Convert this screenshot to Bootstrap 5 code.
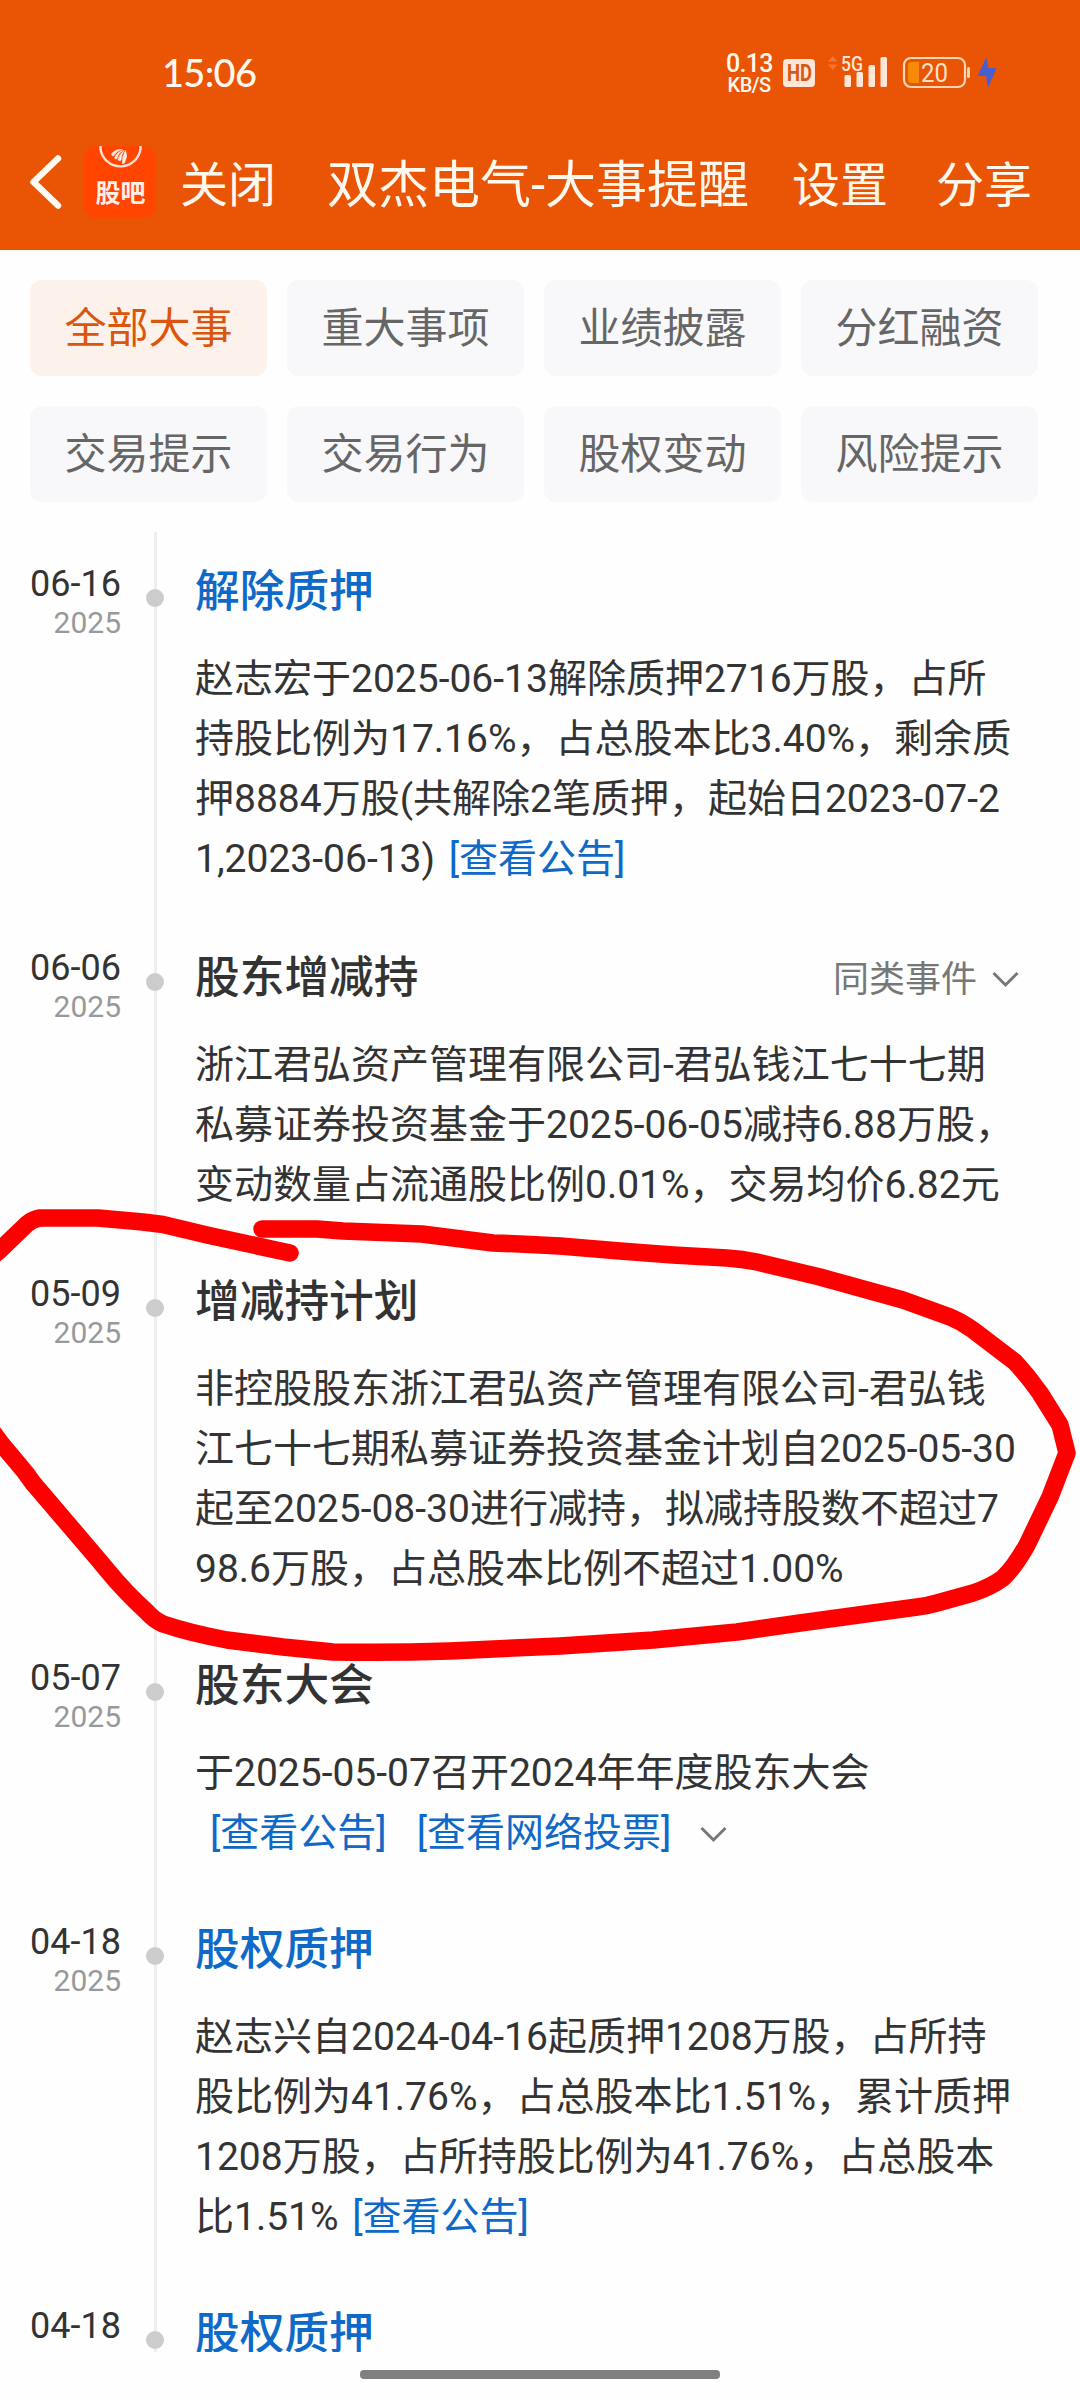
<!DOCTYPE html>
<html lang="zh-CN">
<head>
<meta charset="utf-8">
<meta name="viewport" content="width=device-width, initial-scale=1">
<title>双杰电气-大事提醒</title>
<link href="https://cdn.jsdelivr.net/npm/bootstrap@5.3.0/dist/css/bootstrap.min.css" rel="stylesheet">
<style>
body{width:1080px;height:2400px;margin:0;overflow:hidden;background:#fefefe;color:#333;font-family:Roboto,"Noto Sans CJK SC",sans-serif;font-size:39px;line-height:60px}
.app-top{height:250px;background:#e95504;color:#fff8ee}
.status-bar{height:146px;padding:52px 84px 0 162px}
.clock-text{font:500 38px/40px Lato,"Noto Sans",sans-serif;letter-spacing:-.7px}
.net-speed{width:46px;margin-right:10px;text-align:center;font-weight:500}
.net-speed span{display:block;white-space:nowrap}
.net-num{font-size:25px;line-height:23px;letter-spacing:-.7px}
.net-unit{font-size:20px;line-height:20px;letter-spacing:-.6px}
.title-bar{height:72px;font-size:48px;line-height:72px;white-space:nowrap}
.title-bar span{padding-top:7px}
.page-title{font-size:51px}
.app-logo{width:72px;height:72px}
.filters{display:grid;grid-template-columns:repeat(4,237px);column-gap:20px;row-gap:30px;padding:30px}
.filters .btn{height:96px;padding:1px 0 0;border:0;border-radius:12px;background:#f8f8fa;color:#666;font-size:42px;line-height:95px}
.filters .btn.active{background:#fdf1eb;color:#d9560c}
.timeline{height:1820px;overflow:hidden}
.stamp{width:121px;padding-top:31px;color:#333;font-size:36px;line-height:42px}
.stamp small{display:block;color:#999;font-size:30px;line-height:36px}
.rail{width:18px;margin:0 31px 0 25px;padding-top:57px;background:linear-gradient(#eee,#eee) 8px 0/3px 100% no-repeat}
.rail i{display:block;width:18px;height:18px;border-radius:50%;background:#ccc}
.entry-main{width:824px;padding:29px 0 27px;white-space:nowrap}
.entry-main h2{margin:0;font-size:44.700px;line-height:63px;font-weight:500}
.entry-head{margin-bottom:25px}
.has-more{height:65px}
.link-blue{color:#0f69c8;text-decoration:none}
.more-toggle{color:#777;font-size:36px;line-height:60px}
.home-bar{width:360px;height:9px;margin:18px auto 0;border-radius:4px;background:#808080}
.ink{left:0;top:1190px;pointer-events:none}
</style>
<script src="https://cdn.jsdelivr.net/npm/bootstrap@5.3.0/dist/js/bootstrap.bundle.min.js"></script>
</head>
<body class="position-relative">
<header class="app-top">
  <div class="status-bar d-flex justify-content-between align-items-start">
    <span class="clock-text">15:06</span>
    <div class="d-flex">
      <div class="net-speed"><span class="net-num">0.13</span><span class="net-unit">KB/S</span></div>
      <svg width="214" height="40" viewBox="782 52 214 40" font-family="Roboto,sans-serif">
        <rect x="783" y="59" width="32" height="28" rx="4" fill="#ffe6d8"/>
        <text x="787" y="81" font-size="23" font-weight="700" fill="#d35a14" textLength="25" lengthAdjust="spacingAndGlyphs">HD</text>
        <path d="M828 61.500l4.700-5.500 4.700 5.500zM828 64.500l4.700 5.500 4.700-5.500z" fill="#f87434"/>
        <text x="841" y="71" font-size="21" font-weight="500" fill="#ffe6d8" textLength="22" lengthAdjust="spacingAndGlyphs">5G</text>
        <g fill="#ffe6d8"><rect x="844.500" y="75" width="6.500" height="12" rx="1.500"/><rect x="856.500" y="72" width="6.500" height="15" rx="1.500"/><rect x="868.500" y="65" width="6.500" height="22" rx="1.500"/><rect x="880.500" y="57" width="6.500" height="30" rx="1.500"/></g>
        <rect x="904" y="58" width="61" height="29" rx="7" fill="none" stroke="#ffd6b8" stroke-width="2.200"/>
        <rect x="967" y="67" width="3" height="11" rx="1.500" fill="#ffd6b8"/>
        <path d="M919 62h-8q-3 0-3 3v15q0 3 3 3h8z" fill="#f78a08"/>
        <text x="921" y="81.500" font-size="25" fill="#ffe0c8" textLength="27" lengthAdjust="spacingAndGlyphs">20</text>
        <path d="M986.500 57l-9 19h8.500l2 12 8.500-20h-8.500z" fill="#4a5fcc"/>
      </svg>
    </div>
  </div>
  <nav class="title-bar d-flex align-items-center">
    <svg width="84" height="72" viewBox="0 146 84 72" fill="none" stroke="#fffaf2" stroke-width="6.500" stroke-linecap="round" stroke-linejoin="round"><path d="M58 158.500L33.500 182 58 205.500"/></svg>
    <svg class="app-logo" viewBox="0 0 72 72">
      <rect width="72" height="72" rx="13" fill="#ff4500"/>
      <path d="M16.500 0v3a20.200 20.200 0 0 0 40 0v-3" fill="none" stroke="#ffe3d8" stroke-width="2.300"/>
      <path d="M38 3.500Q31 3 27.500 8q0 2 2 2Q32 5 38 3.500zM39 4Q32 7 30.500 12q1 1.500 2.500.5Q34 7 39 4zM40 4.500Q35 9 34 14q1.500 1.500 3 0Q37 9 40 4.500zM41.500 4.500Q38 10 38.500 17.500q2 .5 2.500-2Q44 10 41.500 4.500z" fill="#fff0e8" stroke="#fff0e8" stroke-width=".6"/>
      <text x="36.500" y="56" text-anchor="middle" font-family="Noto Sans CJK SC,sans-serif" font-weight="700" font-size="25" fill="#fff0e8">股吧</text>
    </svg>
    <span style="margin-left:24px">关闭</span>
    <span class="page-title" style="margin-left:51px">双杰电气-大事提醒</span>
    <span class="ms-auto">设置</span>
    <span style="margin:0 48px 0 48px">分享</span>
  </nav>
</header>
<section class="filters">
  <button class="btn active">全部大事</button><button class="btn">重大事项</button><button class="btn">业绩披露</button><button class="btn">分红融资</button>
  <button class="btn">交易提示</button><button class="btn">交易行为</button><button class="btn">股权变动</button><button class="btn">风险提示</button>
</section>
<main class="timeline">
  <article class="d-flex">
    <div class="stamp text-end">06-16<small>2025</small></div><div class="rail"><i></i></div>
    <div class="entry-main"><div class="entry-head"><h2 class="link-blue">解除质押</h2></div>
      <div>赵志宏于2025-06-13解除质押2716万股，占所<br>持股比例为17.16%，占总股本比3.40%，剩余质<br>押8884万股(共解除2笔质押，起始日2023-07-2<br>1,2023-06-13) <a class="link-blue ms-1">[查看公告]</a></div></div>
  </article>
  <article class="d-flex">
    <div class="stamp text-end">06-06<small>2025</small></div><div class="rail"><i></i></div>
    <div class="entry-main"><div class="entry-head has-more d-flex justify-content-between align-items-end"><h2>股东增减持</h2>
        <span class="more-toggle d-flex align-items-center">同类事件<svg style="margin-left:15px" width="27" height="18" viewBox="0 0 27 18" fill="none" stroke="#777" stroke-width="3"><path d="M1.500 2l12 12 12-12"/></svg></span></div>
      <div>浙江君弘资产管理有限公司-君弘钱江七十七期<br>私募证券投资基金于2025-06-05减持6.88万股，<br>变动数量占流通股比例0.01%，交易均价6.82元</div></div>
  </article>
  <article class="d-flex">
    <div class="stamp text-end">05-09<small>2025</small></div><div class="rail"><i></i></div>
    <div class="entry-main"><div class="entry-head"><h2>增减持计划</h2></div>
      <div>非控股股东浙江君弘资产管理有限公司-君弘钱<br>江七十七期私募证券投资基金计划自2025-05-30<br>起至2025-08-30进行减持，拟减持股数不超过7<br>98.6万股，占总股本比例不超过1.00%</div></div>
  </article>
  <article class="d-flex">
    <div class="stamp text-end">05-07<small>2025</small></div><div class="rail"><i></i></div>
    <div class="entry-main"><div class="entry-head"><h2>股东大会</h2></div>
      <div>于2025-05-07召开2024年年度股东大会</div>
      <div class="d-flex align-items-center" style="padding-left:15px"><a class="link-blue">[查看公告]</a><a class="link-blue" style="margin-left:30px">[查看网络投票]</a><svg class="mt-1" style="margin-left:29px" width="27" height="18" viewBox="0 0 27 18" fill="none" stroke="#777" stroke-width="3"><path d="M1.500 2l12 12 12-12"/></svg></div></div>
  </article>
  <article class="d-flex">
    <div class="stamp text-end">04-18<small>2025</small></div><div class="rail"><i></i></div>
    <div class="entry-main"><div class="entry-head"><h2 class="link-blue">股权质押</h2></div>
      <div>赵志兴自2024-04-16起质押1208万股，占所持<br>股比例为41.76%，占总股本比1.51%，累计质押<br>1208万股，占所持股比例为41.76%，占总股本<br>比1.51% <a class="link-blue ms-1">[查看公告]</a></div></div>
  </article>
  <article class="d-flex">
    <div class="stamp text-end">04-18</div><div class="rail"><i></i></div>
    <div class="entry-main"><div class="entry-head"><h2 class="link-blue">股权质押</h2></div></div>
  </article>
</main>
<div class="home-bar"></div>
<!-- Hand-drawn marker loop over the 05-09 entry -->
<svg class="ink position-absolute" width="1080" height="490" viewBox="0 1190 1080 490" fill="none" stroke="#f00" stroke-width="17.500" stroke-linecap="round" stroke-linejoin="round">
  <path d="M290 1253L207 1235 163 1224.500 143 1222 98 1218H40Q33 1219 27 1224L0 1250-14 1262"/>
  <path d="M262 1229H317L343 1231 422 1234 493 1243 520 1244 560 1246 620 1251 673 1255 727 1258Q742 1259 757 1262L820 1277 903 1300 950 1317Q962 1322 973 1330L1015 1362Q1028 1376 1040 1393L1060 1425 1067 1453 1050 1497 1027 1545Q1014 1568 1003 1578 991 1587 973 1593L937 1603Q927 1606 917 1607L800 1623 737 1632 653 1640 560 1646 450 1651Q391 1653 333 1652L283 1647 227 1640Q190 1633 163 1624 154 1620 147 1612 125 1592 107 1570L97 1558 33 1483 25 1472 0 1442-14 1423"/>
</svg>
</body>
</html>
